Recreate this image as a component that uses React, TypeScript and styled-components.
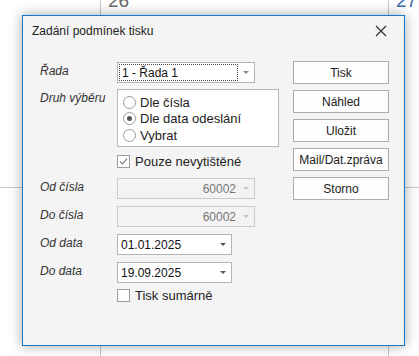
import React from "react";
import styled, { createGlobalStyle } from "styled-components";

const GlobalStyle = createGlobalStyle`
  html, body {
    margin: 0;
    padding: 0;
    background: #ffffff;
    overflow: hidden;
  }
  body {
    font-family: "Liberation Sans", Arial, sans-serif;
    font-size: 12px;
    color: #222;
  }
`;

const App: React.FC = () => {
  return (
    <Screen>
      <GlobalStyle />
      <Calendar>
        <DayCell />
        <DayCell>
          <DayNumber>26</DayNumber>
        </DayCell>
        <DayCell>
          <DayNumber $accent>27</DayNumber>
        </DayCell>
        <DayCell />
        <DayCell />
        <DayCell />
      </Calendar>

      <Dialog>
        <TitleBar>
          <Title>Zadání podmínek tisku</Title>
          <CloseIcon width="12" height="12" viewBox="0 0 12 12">
            <path d="M1 1 L11 11 M11 1 L1 11" stroke="#333" strokeWidth="1.2" />
          </CloseIcon>
        </TitleBar>
        <Body>
          <Form>
            <Row>
              <Label>Řada</Label>
              <Combo $width={138}>
                <FocusText>1 - Řada 1</FocusText>
                <Arrow $tone="#8a8a8a" />
              </Combo>
            </Row>
            <Row $gap={6}>
              <Label>Druh výběru</Label>
              <RadioGroup>
                <RadioItem>
                  <Radio />
                  Dle čísla
                </RadioItem>
                <RadioItem>
                  <Radio $checked />
                  Dle data odeslání
                </RadioItem>
                <RadioItem>
                  <Radio />
                  Vybrat
                </RadioItem>
              </RadioGroup>
            </Row>
            <Row $gap={7}>
              <Label />
              <CheckItem>
                <CheckBox>
                  <svg width="11" height="11" viewBox="0 0 11 11">
                    <path d="M2 5.6 L4.5 8 L9 2.6" fill="none" stroke="#7a7a7a" strokeWidth="1.1" />
                  </svg>
                </CheckBox>
                Pouze nevytištěné
              </CheckItem>
            </Row>
            <Row $gap={9}>
              <Label>Od čísla</Label>
              <Combo $width={138} $disabled>
                <ComboText $right $muted>60002</ComboText>
                <Arrow $tone="#c4c4c4" />
              </Combo>
            </Row>
            <Row $gap={7}>
              <Label>Do čísla</Label>
              <Combo $width={138} $disabled>
                <ComboText $right $muted>60002</ComboText>
                <Arrow $tone="#c4c4c4" />
              </Combo>
            </Row>
            <Row $gap={7}>
              <Label>Od data</Label>
              <Combo $width={115}>
                <ComboText>01.01.2025</ComboText>
                <Arrow $tone="#555" />
              </Combo>
            </Row>
            <Row $gap={7}>
              <Label>Do data</Label>
              <Combo $width={115}>
                <ComboText>19.09.2025</ComboText>
                <Arrow $tone="#555" />
              </Combo>
            </Row>
            <Row $gap={5}>
              <Label />
              <CheckItem>
                <CheckBox />
                Tisk sumárně
              </CheckItem>
            </Row>
          </Form>
          <Buttons>
            <Button>Tisk</Button>
            <Button>Náhled</Button>
            <Button>Uložit</Button>
            <Button>Mail/Dat.zpráva</Button>
            <Button>Storno</Button>
          </Buttons>
        </Body>
      </Dialog>
    </Screen>
  );
};

const Screen = styled.div`
  position: relative;
  width: 419px;
  height: 356px;
  overflow: hidden;
  background: #fff;
`;

const Calendar = styled.div`
  display: grid;
  grid-template-columns: 100px 288px 200px;
  grid-template-rows: 200px 200px;
  margin-top: -12px;
`;

const DayCell = styled.div`
  border-left: 1px solid #c9c9c9;
  border-bottom: 1px solid #c9c9c9;
  padding: 0 0 0 7px;
  &:nth-child(3n + 1) {
    border-left: none;
  }
`;

const DayNumber = styled.div<{ $accent?: boolean }>`
  font-family: "Liberation Sans", Arial, sans-serif;
  font-size: 19px;
  line-height: 20px;
  padding-top: 3px;
  color: ${(p) => (p.$accent ? "#3a6fb0" : "#6a6a6a")};
`;

const Dialog = styled.div`
  position: absolute;
  left: 22px;
  top: 15px;
  width: 381px;
  height: 329px;
  border: 1px solid #1b78c8;
  background: #f4f4f4;
  box-shadow: 0 0 12px rgba(0, 0, 0, 0.35);
  display: flex;
  flex-direction: column;
`;

const TitleBar = styled.div`
  height: 30px;
  display: flex;
  align-items: center;
  justify-content: space-between;
  padding: 0 17px 0 9px;
`;

const Title = styled.span`
  font-size: 12px;
  color: #222;
`;

const CloseIcon = styled.svg`
  display: block;
`;

const Body = styled.div`
  display: flex;
  justify-content: space-between;
  padding: 16px 15px 0 17px;
`;

const Form = styled.div`
  display: flex;
  flex-direction: column;
`;

const Row = styled.div<{ $gap?: number }>`
  display: flex;
  align-items: flex-start;
  margin-top: ${(p) => p.$gap ?? 0}px;
`;

const Label = styled.div`
  width: 77px;
  flex: none;
  font-style: italic;
  color: #333;
  line-height: 15px;
  padding-top: 2px;
`;

const Combo = styled.div<{ $width: number; $disabled?: boolean }>`
  width: ${(p) => p.$width}px;
  height: 21px;
  box-sizing: border-box;
  border: 1px solid ${(p) => (p.$disabled ? "#cbcbcb" : "#b4b4b4")};
  background: ${(p) => (p.$disabled ? "#f3f3f3" : "#fff")};
  display: flex;
  align-items: stretch;
`;

const FocusText = styled.div`
  flex: 1;
  margin: 1px 0 1px 1px;
  border: 1px dotted #444;
  display: flex;
  align-items: center;
  padding-left: 2px;
  color: #111;
`;

const ComboText = styled.div<{ $right?: boolean; $muted?: boolean }>`
  flex: 1;
  display: flex;
  align-items: center;
  justify-content: ${(p) => (p.$right ? "flex-end" : "flex-start")};
  padding: 0 2px 0 3px;
  color: ${(p) => (p.$muted ? "#777" : "#111")};
`;

const Arrow = styled.div<{ $tone: string }>`
  width: 16px;
  flex: none;
  position: relative;
  &::after {
    content: "";
    position: absolute;
    left: 5px;
    top: 8px;
    border-left: 3px solid transparent;
    border-right: 3px solid transparent;
    border-top: 3px solid ${(p) => p.$tone};
  }
`;

const RadioGroup = styled.div`
  width: 162px;
  height: 58px;
  box-sizing: border-box;
  border: 1px solid #b9b9b9;
  background: #fff;
  display: flex;
  flex-direction: column;
  padding: 4px 0 0 5px;
`;

const RadioItem = styled.div`
  display: flex;
  align-items: center;
  gap: 4px;
  height: 16.5px;
  font-size: 13px;
  color: #222;
`;

const Radio = styled.span`
  width: 13px;
  height: 13px;
  box-sizing: border-box;
  border-radius: 50%;
  border: 1px solid #9a9a9a;
  background: #fff;
  flex: none;
  display: flex;
  align-items: center;
  justify-content: center;
  &::after {
    content: "";
    width: 5px;
    height: 5px;
    border-radius: 50%;
    background: ${(p: { $checked?: boolean }) => (p.$checked ? "#555" : "transparent")};
  }
`;

const CheckItem = styled.div`
  display: flex;
  align-items: center;
  gap: 5px;
  height: 15px;
  font-size: 13px;
  color: #222;
`;

const CheckBox = styled.span`
  width: 13px;
  height: 13px;
  box-sizing: border-box;
  border: 1px solid #9d9d9d;
  background: #fff;
  flex: none;
  display: flex;
  align-items: center;
  justify-content: center;
`;

const Buttons = styled.div`
  display: flex;
  flex-direction: column;
  gap: 6px;
  margin-top: -1px;
`;

const Button = styled.button`
  width: 96px;
  height: 23px;
  box-sizing: border-box;
  border: 1px solid #adadad;
  background: #fdfdfd;
  font-family: "Liberation Sans", Arial, sans-serif;
  font-size: 12px;
  color: #222;
  padding: 0;
`;

export default App;
